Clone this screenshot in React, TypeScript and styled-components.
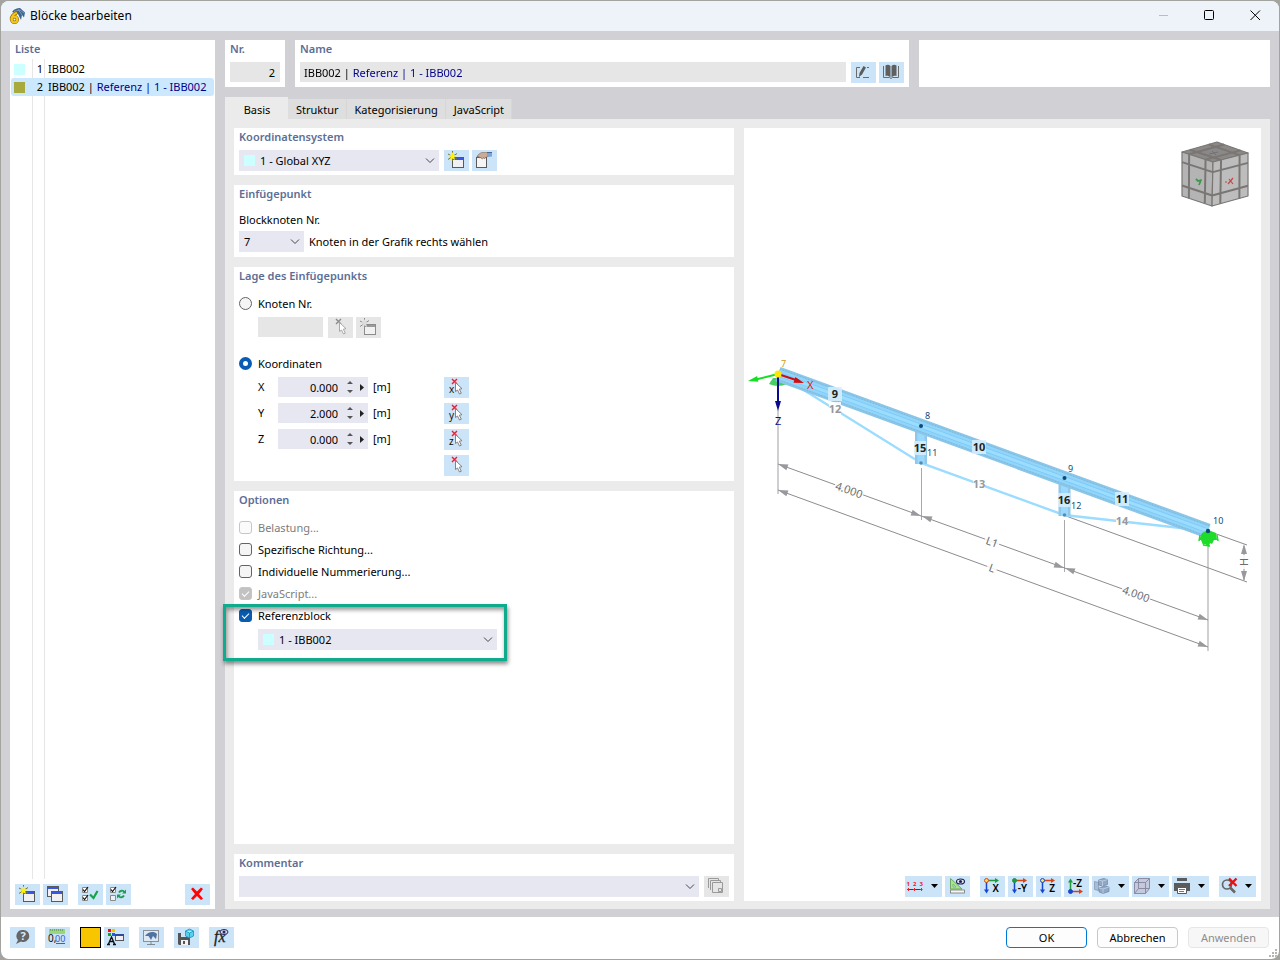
import React, { useState } from 'react';
import styled, { createGlobalStyle, css } from 'styled-components';

const color = {
  frame: '#d1d0d5',
  panel: '#ebebeb',
  field: '#e7e7f1',
  readOnly: '#e6e6e6',
  action: '#cbe4f8',
  heading: '#5c6e96',
  navy: '#00008b',
};

const GlobalStyle = createGlobalStyle`
  *, *::before, *::after { box-sizing: border-box; }
  body {
    margin: 0;
    background: #a3a39f;
    color: #000;
    font-family: "Noto Sans", "Open Sans", sans-serif;
    font-size: 11px;
    line-height: 18px;
  }
  button, input, select { font: inherit; color: inherit; margin: 0; }
`;

const Desktop = styled.div`
  display: flex;
  min-height: 100vh;
  padding: 1px;
`;

const Window = styled.div`
  flex: 1;
  display: flex;
  flex-direction: column;
  min-width: 0;
  border-radius: 8px;
  overflow: hidden;
  background: #fff;
`;

const TitleBar = styled.header`
  display: flex;
  align-items: center;
  height: 30px;
  padding-left: 8px;
  background: #eef3fa;
`;

const WindowTitle = styled.h1`
  flex: 1;
  margin: 0 0 0 5px;
  font-size: 12px;
  font-weight: 400;
`;

const CaptionButton = styled.button`
  width: 46px;
  height: 30px;
  padding: 0 1px 2px 0;
  border: 0;
  background: none;
  svg { display: block; margin: 0 auto; }
`;

const Body = styled.main`
  flex: 1;
  display: flex;
  gap: 10px;
  padding: 9px 9px 8px;
  background: ${color.frame};
`;

const ListPanel = styled.aside`
  display: flex;
  flex-direction: column;
  width: 205px;
  background: #fff;
`;

const Heading = styled.h2<{ $inset?: boolean }>`
  display: block;
  height: 19px;
  margin: 0;
  padding: 0 ${(p) => (p.$inset ? '5px' : '0')};
  color: ${color.heading};
  font-size: 11px;
  font-weight: 600;
  line-height: 18px;
`;

const ListArea = styled.div`
  flex: 1;
  padding: 1px 1px 0;
  background:
    linear-gradient(#e6e6e6, #e6e6e6) 22px 0 / 1px 100% no-repeat,
    linear-gradient(#e6e6e6, #e6e6e6) 34px 0 / 1px 100% no-repeat;
`;

const BlockTable = styled.table`
  width: 100%;
  table-layout: fixed;
  border-collapse: collapse;
  td { height: 18px; padding: 0; line-height: 18px; white-space: nowrap; }
  td:nth-child(1) { width: 22px; padding-left: 3px; border-radius: 3px 0 0 3px; }
  td:nth-child(2) { width: 12px; padding-right: 2px; text-align: right; }
  td:nth-child(3) { padding-left: 3px; border-radius: 0 3px 3px 0; }
`;

const BlockRow = styled.tr<{ $selected?: boolean }>`
  td { background: ${(p) => (p.$selected ? '#cce8ff' : 'transparent')}; }
`;

const Swatch = styled.span<{ $color: string }>`
  display: block;
  width: 11px;
  height: 11px;
  background: ${(p) => p.$color};
`;

const Reference = styled.span`
  color: ${color.navy};
`;

const ButtonRow = styled.div<{ $gap?: number }>`
  display: flex;
  gap: ${(p) => p.$gap ?? 3}px;
`;

const ListTools = styled.div`
  display: flex;
  gap: 10px;
  padding: 5px 5px 4px;
`;

const Spacer = styled.div`
  flex: 1;
`;

const IconButton = styled.button<{ $menu?: boolean }>`
  display: flex;
  align-items: center;
  flex: none;
  width: ${(p) => (p.$menu ? 37 : 25)}px;
  height: 21px;
  padding: 0;
  border: 0;
  background: ${color.action};
  &:disabled { background: ${color.readOnly}; }
  svg { display: block; flex: none; }
`;

const ColorButton = styled.button`
  width: 21px;
  height: 21px;
  margin-right: 3px;
  padding: 0;
  border: 1px solid #000;
  background: #f7c600;
`;

const Editor = styled.section`
  flex: 1;
  display: flex;
  flex-direction: column;
  min-width: 0;
`;

const HeaderRow = styled.div`
  display: grid;
  grid-template-columns: 60px minmax(0, 614fr) minmax(0, 351fr);
  gap: 10px;
  height: 47px;
`;

const HeaderCard = styled.div`
  padding: 0 5px;
  background: #fff;
`;

const FieldLine = styled.div`
  display: flex;
  gap: 5px;
  padding-top: 3px;
`;

const NumberField = styled.input`
  display: block;
  width: 100%;
  height: 20px;
  padding: 1px 5px 0;
  border: 0;
  background: ${color.readOnly};
  text-align: right;
`;

const NameBox = styled.div`
  flex: 1;
  height: 20px;
  background: ${color.readOnly};
`;

const NameField = styled.input`
  display: block;
  width: 100%;
  height: 20px;
  padding: 0 4px;
  border: 0;
  background: linear-gradient(90deg, #000 48px, ${color.navy} 48px);
  background-clip: text;
  -webkit-text-fill-color: transparent;
`;

const Tabs = styled.div`
  display: flex;
  align-items: flex-end;
  height: 32px;
`;

const Tab = styled.button<{ $active?: boolean }>`
  height: 20px;
  padding: 2px 7px 0 8px;
  border: 0;
  border-right: 1px solid #d6d6d6;
  background: #dedede;
  ${(p) =>
    p.$active &&
    css`
      width: 63px;
      height: 22px;
      padding-top: 4px;
      border: 0;
      background: ${color.panel};
    `}
`;

const TabPanel = styled.div`
  flex: 1;
  display: flex;
  gap: 10px;
  padding: 9px 9px 8px;
  background: ${color.panel};
`;

const FormColumn = styled.div`
  flex: none;
  display: flex;
  flex-direction: column;
  gap: 10px;
  width: 500px;
`;

const Card = styled.section<{ $grow?: boolean; $bottom?: number }>`
  flex: ${(p) => (p.$grow ? '1' : 'none')};
  padding: 0 5px ${(p) => p.$bottom ?? 5}px;
  background: #fff;
`;

const Line = styled.div<{ $top?: number; $gap?: number; $indent?: boolean }>`
  display: flex;
  align-items: ${(p) => (p.$indent ? 'flex-start' : 'center')};
  gap: ${(p) => p.$gap ?? 5}px;
  margin-top: ${(p) => p.$top ?? 0}px;
  padding-left: ${(p) => (p.$indent ? 19 : 0)}px;
`;

const FieldLabel = styled.label`
  display: block;
  margin: 7px 0 2px;
`;

const SelectBox = styled.div<{ $width?: number }>`
  position: relative;
  ${(p) => (p.$width ? `width: ${p.$width}px;` : 'flex: 1;')}
  height: 21px;
`;

const SelectField = styled.select<{ $swatch?: boolean }>`
  appearance: none;
  display: block;
  width: 100%;
  height: 21px;
  padding: 0 20px 0 ${(p) => (p.$swatch ? 21 : 5)}px;
  border: 0;
  border-radius: 0;
  background: ${color.field};
`;

const SelectSwatch = styled(Swatch)`
  position: absolute;
  top: 5px;
  left: 5px;
`;

const Chevron = styled.svg`
  position: absolute;
  top: 8px;
  right: 4px;
  pointer-events: none;
`;

const Choice = styled.label<{ $disabled?: boolean }>`
  display: flex;
  align-items: center;
  gap: 6px;
  height: 22px;
  color: ${(p) => (p.$disabled ? '#7c7c7c' : '#000')};
  input { margin-bottom: 1px; }
`;

const Checkbox = styled.input.attrs({ type: 'checkbox' })`
  appearance: none;
  display: flex;
  align-items: center;
  justify-content: center;
  width: 13px;
  height: 13px;
  border: 1px solid #636363;
  border-radius: 3px;
  background: #f5f5f5;
  &:checked { border-color: #0a5cb3; background: #0a5cb3; }
  &:disabled { border-color: #c6c6c6; background: #fbfbfb; }
  &:disabled:checked { background: #c2c2c2; }
  &:checked::before {
    content: '';
    width: 7px;
    height: 4px;
    border: solid #fff;
    border-width: 0 0 1px 1px;
    transform: translateY(-1px) rotate(-45deg);
  }
`;

const Radio = styled.input.attrs({ type: 'radio' })`
  appearance: none;
  width: 13px;
  height: 13px;
  border: 1px solid #636363;
  border-radius: 50%;
  background: #f5f5f5;
  &:checked { border: 4px solid #0a5cb3; background: #fff; }
`;

const NodeField = styled.input`
  width: 65px;
  height: 20px;
  padding: 0;
  border: 0;
  background: ${color.readOnly};
`;

const CoordinateLine = styled.div`
  display: grid;
  grid-template-columns: 20px 90px 76px 25px;
  align-items: start;
  height: 26px;
  padding-left: 19px;
  &:last-child { height: 21px; }
  label { line-height: 20px; }
  button { grid-column: 4; }
`;

const Unit = styled.span`
  padding-left: 5px;
  line-height: 20px;
`;

const Spinner = styled.div`
  display: flex;
  height: 20px;
  background: ${color.field};
`;

const SpinnerField = styled.input`
  width: 60px;
  height: 20px;
  padding: 1px 0 0;
  border: 0;
  background: none;
  text-align: right;
`;

const SpinnerButtons = styled.button`
  width: 30px;
  height: 20px;
  padding: 0;
  border: 0;
  background: none;
  svg { display: block; }
`;

const ReferenceGroup = styled.div`
  position: relative;
`;

const Highlight = styled.div`
  position: absolute;
  top: -1px;
  left: -16px;
  width: 284px;
  height: 57px;
  border: 3px solid #0fab8c;
  box-shadow: 1px 3px 4px rgba(0, 0, 0, 0.45), inset 1px 3px 4px rgba(0, 0, 0, 0.4);
  pointer-events: none;
`;

const Viewport = styled.section`
  flex: 1;
  display: flex;
  flex-direction: column;
  min-width: 0;
  background: #fff;
`;

const Scene = styled.svg`
  flex: 1;
  display: block;
  width: 100%;
  min-height: 400px;
`;

const ViewTools = styled.div`
  display: flex;
  justify-content: flex-end;
  gap: 10px;
  padding: 0 5px 4px;
`;

const Footer = styled.footer`
  position: relative;
  display: flex;
  align-items: center;
  gap: 10px;
  height: 42px;
  padding: 0 10px 1px 9px;
`;

const DialogButton = styled.button<{ $primary?: boolean }>`
  width: 81px;
  height: 21px;
  padding: 0;
  border: 1px solid ${(p) => (p.$primary ? '#0078d4' : '#c8c8c8')};
  border-radius: 4px;
  background: #fdfdfd;
  &:disabled { border-color: #e6e6e6; background: #f7f7f7; color: #8e8e8e; }
`;

const SizeGrip = styled.svg`
  position: absolute;
  right: 2px;
  bottom: 2px;
`;

function Icon({ children, width = 25 }: { children: React.ReactNode; width?: number }) {
  return (
    <svg width={width} height="21" viewBox={`0 0 ${width} 21`} fill="none" aria-hidden="true">
      {children}
    </svg>
  );
}

function MiniWindow({ x, y, gray }: { x: number; y: number; gray?: boolean }) {
  return (
    <g>
      <rect x={x + 0.5} y={y + 0.5} width="11" height="10" fill="#f1f1f3" stroke={gray ? '#8b8b8b' : '#5a5a5a'} />
      <rect x={x + 1} y={y + 1} width="10" height="2" fill={gray ? '#9a9a9a' : '#3857e6'} />
    </g>
  );
}

function NewIcon({ gray }: { gray?: boolean }) {
  return (
    <Icon>
      <MiniWindow x={8} y={7} gray={gray} />
      <path d="M8.500 1v10M4 4l9 5M4 9.500l9-6" stroke={gray ? '#8f8f8f' : '#77772c'} />
      <path d="M8.500 2l1.200 3 3 .500-2.500 1.500.800 3-2.500-1.600L6 10l.800-3L4.300 5.500l3-.500z" fill={gray ? '#dcdcdc' : '#fff200'} />
    </Icon>
  );
}

function EditIcon() {
  return (
    <Icon>
      <rect x="4.500" y="7.500" width="10" height="10" fill="#f5f5f5" stroke="#5a5a5a" />
      <path d="M5 7h4" stroke="#3857e6" strokeWidth="2" />
      <path d="M5 6.500C6 4.500 8 3 10 2.500h5l1 .500v3.500l-2 .500-1 1.500h-1l-.500-1-1 1.500-1-.500-.500-1-1.500.500v-1z" fill="#cbab96" stroke="#876b58" strokeWidth=".6" />
      <path d="M15 2.500h5v4l-4 .500z" fill="#7fa3d4" />
      <path d="M15 2.500h5" stroke="#44679b" />
    </Icon>
  );
}

function CopyIcon() {
  return (
    <Icon>
      <MiniWindow x={4} y={2} />
      <MiniWindow x={8} y={7} />
    </Icon>
  );
}

function CheckAllIcon() {
  return (
    <Icon>
      <path d="M4.500 3.500h5v5h-5zM4.500 11.500h5v5h-5z" fill="#fff" stroke="#8a8a8a" />
      <path d="M5 5.500l1.500 2L10 3M5 13.500l1.500 2 3.500-4.500" stroke="#111" strokeWidth="1.200" />
      <path d="M12 10.500l3.500 3.500 4-7" stroke="#16a34c" strokeWidth="2.200" />
    </Icon>
  );
}

function InvertIcon() {
  return (
    <Icon>
      <path d="M4.500 3.500h5v5h-5z" fill="#fff" stroke="#8a8a8a" />
      <path d="M4.500 11.500h5v5h-5z" fill="#e9f2fa" stroke="#8a8a8a" />
      <path d="M5 5.500l1.500 2L10 3" stroke="#111" strokeWidth="1.200" />
      <path d="M13 8.500c1-2 4-2.500 5.500-.500M18 11.500c-1 2-4 2.500-5.500 .500" stroke="#229b50" strokeWidth="1.800" />
      <path d="M20 5.500v4h-4zM11 14.500v-4h4z" fill="#229b50" />
    </Icon>
  );
}

function DeleteIcon() {
  return (
    <Icon>
      <path d="M6 5l2-1.500 4 4 4-4L18 5l-4 5 4 4.500-2 1.500-4-4-4 4-2-1.500 4-4.500z" fill="#fb0505" />
    </Icon>
  );
}

function PenIcon() {
  return (
    <Icon>
      <path d="M9 5.500H5.500v10H9M12 15.500h6M16 5.500h2" stroke="#6b6b6b" />
      <path d="M8 15l.500-4 4-7 2.500 1.500-4 7z" fill="#5b5b5b" />
    </Icon>
  );
}

function BookIcon() {
  return (
    <Icon>
      <path d="M11.500 4C10 2.500 8 2.500 6.500 3.500v10.500c2-.500 3.500 0 5 1.500zM12.500 4c1.500-1.500 3.500-1.500 5-.500v10.500c-2-.500-3.500 0-5 1.500z" fill="#5f5f5f" />
      <path d="M4.500 4v11.500h6l1.500 1 1.500-1h6V4" stroke="#6b6b6b" />
    </Icon>
  );
}

function PickIcon({ axis, gray }: { axis?: string; gray?: boolean }) {
  return (
    <Icon>
      <path d="M8 2l5 5M13 2L8 7" stroke={gray ? '#8b8b8b' : '#f01b2d'} strokeWidth="1.400" />
      <path d="M11.500 5.500v9l2-1.500 2 4 1.800-.800-2-4 2.700-.500z" fill="#fff" stroke={gray ? '#a0a0a0' : '#777'} strokeWidth=".9" />
      {axis && (
        <text x="5" y="16" fontSize="10" fill="#111">
          {axis}
        </text>
      )}
    </Icon>
  );
}

function StackIcon() {
  return (
    <Icon>
      <path d="M4.500 12V2.500h10V4M6.500 14V4.500h10V6M8.500 6.500h10v10h-10z" stroke="#9a9a9a" />
      <path d="M14.500 12.500h3v3h-3z" stroke="#9a9a9a" />
    </Icon>
  );
}

function HelpIcon() {
  return (
    <Icon>
      <path d="M13 3a6 6 0 1 1-2 11.500L6 17l2-4A6 6 0 0 1 13 3z" fill="#666" />
      <text x="13" y="13" fontSize="11" fontWeight="700" textAnchor="middle" fill="#dcecf8">?</text>
    </Icon>
  );
}

function UnitsIcon() {
  return (
    <Icon>
      <path d="M4 2h16v5H4z" fill="#9bd67c" />
      <path d="M5.500 2v2M7.500 2v2M9.500 2v2M11.500 2v2M13.500 2v2M15.500 2v2M17.500 2v2" stroke="#549444" strokeWidth=".6" />
      <text x="3" y="15" fontSize="10" fill="#111">0,</text>
      <text x="10" y="15" fontSize="9" fill="#2e62d8">00</text>
      <path d="M11 16.500h9" stroke="#2e62d8" />
    </Icon>
  );
}

function DisplayIcon() {
  return (
    <Icon>
      <path d="M4 2h3v3H4z" fill="#e11" />
      <path d="M8 2h3v3H8z" fill="#e5c800" />
      <path d="M4 6h3v3H4z" fill="#1b9e2c" />
      <path d="M8 6h3v3H8z" fill="#2458e0" />
      <path d="M4.500 17l3-7 3 7M5.500 14.500h4M3 17.500h3M9 17.500h3" stroke="#111" strokeWidth="1.400" />
      <rect x="11.500" y="7.500" width="8" height="6" fill="#eee" stroke="#555" />
      <path d="M11 8h9" stroke="#334a9c" strokeWidth="2" />
    </Icon>
  );
}

function MonitorIcon() {
  return (
    <Icon>
      <rect x="4.500" y="3.500" width="15" height="11" fill="#dfe9f2" stroke="#8a9198" />
      <path d="M6 9c3-4.500 9-5 12-2l-1 5-3-3-2 4-2.500-4z" fill="#4e73a5" />
      <path d="M12 14v3M8 17.500h8" stroke="#7f8790" />
    </Icon>
  );
}

function SaveIcon() {
  return (
    <Icon>
      <path d="M4 6h12v12H5l-1-1z" fill="#555" />
      <path d="M7 6h6v4H7z" fill="#cbe4f8" />
      <path d="M7 13h7v5H7z" fill="#f2f2f2" />
      <path d="M9 14h2v3H9z" fill="#555" />
      <path d="M15.500 2l4 2v5l-4 2-4-2V4zM11.500 4l4 2 4-2M15.500 6v5" fill="#5bd0ee" stroke="#1793bb" strokeWidth=".8" />
    </Icon>
  );
}

function FormulaIcon() {
  return (
    <Icon>
      <text x="5" y="15" fontSize="16" fontFamily="Liberation Serif, serif" fontStyle="italic" fill="#222" stroke="#222" strokeWidth=".3">fx</text>
      <ellipse cx="15" cy="5" rx="4" ry="2.500" fill="#d7daf2" stroke="#27275a" />
      <circle cx="15" cy="5" r="1.500" fill="#27275a" />
    </Icon>
  );
}

const MenuArrow = () => <path d="M26 8h7l-3.500 4z" fill="#000" />;

function NumberingIcon() {
  return (
    <Icon width={37}>
      <g fontSize="6" fontWeight="700" fill="#f0202c">
        <text x="1.500" y="10">1</text>
        <text x="8" y="10">2</text>
        <text x="14.500" y="10">3</text>
      </g>
      <path d="M3 13.500h14" stroke="#333a6a" />
      <path d="M2 13.500h2.500M8 13.500h2.500M15 13.500h2.500M3.500 12v3M9.500 12v3M16.500 12v3" stroke="#f0202c" />
      <MenuArrow />
    </Icon>
  );
}

function MeasureIcon() {
  return (
    <Icon>
      <path d="M5.500 2.500v10.500H17z" fill="#a5e88b" stroke="#6fa765" />
      <path d="M8 8v3h3z" fill="#cbe4f8" stroke="#6fa765" strokeWidth=".7" />
      <rect x="5.500" y="14" width="14" height="3" fill="#f5f5f5" stroke="#777" strokeWidth=".8" />
      <ellipse cx="15.500" cy="5.500" rx="4" ry="2.500" fill="#e4e7fa" stroke="#1e2350" strokeWidth="1.200" />
      <circle cx="15.500" cy="5.500" r="1.600" fill="#1e2350" />
    </Icon>
  );
}

type AxisIconProps = { label: string; node: string; ring: string; horizontal: string; up?: boolean };

function AxisIcon({ label, node, ring, horizontal, up }: AxisIconProps) {
  return (
    <Icon>
      {up ? (
        <>
          <path d="M6.500 15V5" stroke="#1f9b3d" strokeWidth="1.500" />
          <path d="M4 6.500h5L6.500 2.500z" fill="#1f9b3d" />
          <path d="M7 15.500h9" stroke={horizontal} strokeWidth="1.500" />
          <path d="M15 13v5l4-2.500z" fill={horizontal} />
          <circle cx="6.500" cy="15.500" r="2" fill={node} stroke={ring} />
          <text x="9" y="11" fontSize="10" fontWeight="600" fill="#000">{label}</text>
        </>
      ) : (
        <>
          <path d="M6.500 5v10" stroke="#1746d1" strokeWidth="1.500" />
          <path d="M4 13.500h5l-2.500 4z" fill="#1746d1" />
          <path d="M7 4.500h9" stroke={horizontal} strokeWidth="1.500" />
          <path d="M15 2v5l4-2.500z" fill={horizontal} />
          <circle cx="6.500" cy="4.500" r="2" fill={node} stroke={ring} />
          <text x="19" y="16" fontSize="10" fontWeight="600" textAnchor="end" fill="#000">{label}</text>
        </>
      )}
    </Icon>
  );
}

function SolidsIcon() {
  return (
    <Icon width={37}>
      <path d="M2.500 5.500l4 1v8l-4-1z" fill="#a9bcd3" stroke="#7f94b0" strokeWidth=".7" />
      <path d="M6.500 4l5-1.500 4 1v5l-5 1.500-4-1z" fill="#8fa8c6" stroke="#6f87a6" strokeWidth=".7" />
      <path d="M7 12l6-2 4 1v4.500l-6 2-4-1.500z" fill="#8fa8c6" stroke="#6f87a6" strokeWidth=".7" />
      <path d="M6.500 4l4 1 5-1.500M10.500 5v5M7 12l4 1 6-2M11 13v4.500" stroke="#c5d3e4" strokeWidth=".8" />
      <MenuArrow />
    </Icon>
  );
}

function BoxIcon() {
  return (
    <Icon width={37}>
      <path d="M2.500 6.500l4-4h11v10l-4 5h-11z" fill="#c6c8dd" />
      <path d="M2.500 6.500h11v11h-11zM2.500 6.500l4-4h11l-4 4M17.500 2.500v10l-4 5M6.500 2.500v10l-4 5M6.500 12.500h11" stroke="#83859f" strokeWidth=".9" />
      <MenuArrow />
    </Icon>
  );
}

function PrintIcon() {
  return (
    <Icon width={37}>
      <path d="M5 2h10v3H5zM2 7h16v8h-3v-3H5v3H2z" fill="#5b5b5b" />
      <path d="M5.500 11.500h9v6h-9z" fill="#fff" stroke="#5b5b5b" />
      <path d="M7 13.500h6M7 15.500h5" stroke="#777" />
      <MenuArrow />
    </Icon>
  );
}

function SearchOffIcon() {
  return (
    <Icon width={37}>
      <circle cx="8" cy="8.500" r="4.500" stroke="#666" strokeWidth="1.700" />
      <path d="M11 11.500l5 5" stroke="#666" strokeWidth="2.500" />
      <path d="M10 2.500l7.500 7.500M17.500 2.500L10 10" stroke="#f20d0d" strokeWidth="2.400" />
      <MenuArrow />
    </Icon>
  );
}

function AppLogo() {
  return (
    <svg width="16" height="16" viewBox="0 0 16 16" aria-hidden="true">
      <path d="M3 4C5 1 8 0 11 0l5 4.500-1 5-2-2.500-1 5-3-6z" fill="#3d628c" />
      <path d="M5 3.500l6-1.500 4 3M9 1l4 6" stroke="#86a8c8" strokeWidth=".8" fill="none" />
      <path d="M8 5C5 5.500 2.500 8 2.500 11.500" fill="none" stroke="#8d6b00" strokeWidth="3.600" />
      <circle cx="5.500" cy="11.500" r="2.800" fill="#eef3fa" stroke="#8d6b00" strokeWidth="3.400" />
      <path d="M8 5C5 5.500 2.500 8 2.500 11.500" fill="none" stroke="#f3c51c" strokeWidth="2.200" />
      <circle cx="5.500" cy="11.500" r="2.800" fill="none" stroke="#f3c51c" strokeWidth="2.200" />
    </svg>
  );
}

type SelectProps = { id?: string; label?: string; width?: number; swatch?: string; options: string[] };

function Select({ id, label, width, swatch, options }: SelectProps) {
  return (
    <SelectBox $width={width}>
      <SelectField id={id} aria-label={label} $swatch={!!swatch}>
        {options.map((option) => (
          <option key={option}>{option}</option>
        ))}
      </SelectField>
      {swatch && <SelectSwatch $color={swatch} />}
      <Chevron width="10" height="6" viewBox="0 0 10 6" fill="none" stroke="#444" aria-hidden="true">
        <path d="M1 .5l4 4 4-4" />
      </Chevron>
    </SelectBox>
  );
}

type Point = [number, number];

function faceLines(a: Point, b: Point, c: Point, d: Point) {
  const mix = (p: Point, q: Point, t: number) => `${p[0] + (q[0] - p[0]) * t} ${p[1] + (q[1] - p[1]) * t}`;
  return [0.23, 0.76]
    .map((t) => `M${mix(a, b, t)}L${mix(d, c, t)}M${mix(a, d, t)}L${mix(b, c, t)}`)
    .join('');
}

function NavigationCube() {
  const back: Point = [1217, 142];
  const left: Point = [1182, 152];
  const right: Point = [1248, 153];
  const front: Point = [1213, 162];
  const leftLow: Point = [1182, 196];
  const frontLow: Point = [1212, 206];
  const rightLow: Point = [1248, 196];
  const faces: [Point, Point, Point, Point, string][] = [
    [left, back, right, front, '#8b8988'],
    [left, front, frontLow, leftLow, '#b4b4b4'],
    [front, right, rightLow, frontLow, '#bdbdbd'],
  ];
  return (
    <g stroke="#7a7674" strokeWidth="2" strokeLinejoin="round">
      {faces.map(([a, b, c, d, fill]) => (
        <g key={fill}>
          <polygon points={[a, b, c, d].join(' ')} fill={fill} strokeWidth="1.200" />
          <path d={faceLines(a, b, c, d)} fill="none" />
        </g>
      ))}
      <path d="M1209 154l9-2M1212 151l4 4" stroke="#6a7186" strokeWidth="1" />
      <path d="M1196 179l2 2 3-1-2 5" fill="none" stroke="#3d9a4b" strokeWidth="1.800" />
      <path d="M1229 179l4 5M1233 178l-5 6M1225 182h2" fill="none" stroke="#c94444" strokeWidth="1.200" />
    </g>
  );
}

function Arrow({ x, y, angle, fill = '#99999d' }: { x: number; y: number; angle: number; fill?: string }) {
  return <path d="M0 0l-10-3v6z" fill={fill} transform={`translate(${x} ${y}) rotate(${angle})`} />;
}

type TagProps = { x: number; y: number; text: string; width?: number; fill?: string; back?: string; angle?: number };

function Tag({ x, y, text, width = 14, fill = '#222', back = '#d9eefb', angle = 0 }: TagProps) {
  return (
    <g transform={`translate(${x} ${y}) rotate(${angle})`}>
      <rect x={-width / 2} y="-7" width={width} height="14" fill={back} fillOpacity=".85" />
      <text y="4" textAnchor="middle" fill={fill}>{text}</text>
    </g>
  );
}

function TrussScene() {
  return (
    <Scene viewBox="744 128 517 748" role="img" aria-label="Binder" fontSize="11">
      <NavigationCube />
      <g stroke="#cfcfd1" strokeWidth="2">
        <path d="M778 410v84M1208 545v106" />
      </g>
      <path d="M921.500 468v52M1064.500 520v52" stroke="#a9a9ac" />
      <path
        d="M778 464L1208 620M778 490L1208 647M1066 516L1247 582M1208 531L1247 545M1244 546v34"
        stroke="#8c8c90"
        fill="none"
      />
      <Arrow x={778} y={464} angle={200} />
      <Arrow x={921} y={516} angle={20} />
      <Arrow x={922} y={516} angle={200} />
      <Arrow x={1064} y={568} angle={20} />
      <Arrow x={1065} y={568} angle={200} />
      <Arrow x={1208} y={620} angle={20} />
      <Arrow x={778} y={490} angle={200} />
      <Arrow x={1208} y={647} angle={20} />
      <Arrow x={1244} y={544} angle={-90} />
      <Arrow x={1244} y={581} angle={90} />
      <g fontSize="11">
        <Tag x={849} y={490} angle={20} width={30} text="4.000" fill="#6c6c6c" back="#fff" />
        <Tag x={1136} y={594} angle={20} width={30} text="4.000" fill="#6c6c6c" back="#fff" />
        <Tag x={992} y={542} angle={20} width={15} text="L1" fill="#6c6c6c" back="#fff" />
        <Tag x={992} y={568} angle={20} width={10} text="L" fill="#6c6c6c" back="#fff" />
        <Tag x={1244} y={562} angle={-90} width={14} text="H" fill="#6c6c6c" back="#fff" />
      </g>

      <path d="M769 384l4-6h11l3 6q-9 4-18 0z" fill="#45cf62" />
      <path d="M778 374L921 463L1064 515L1208 531" fill="none" stroke="#9bdcff" strokeWidth="2.400" />
      <g fill="none">
        <path d="M921 426v38M1064.500 478v38" stroke="#8fc8e8" strokeWidth="12" />
        <path d="M921 426v38M1064.500 478v38" stroke="#9ad9fd" strokeWidth="7" />
        <path d="M778 374L1208 531" stroke="#8ac6e8" strokeWidth="15" />
        <path d="M778 374L1208 531" stroke="#92d5fb" strokeWidth="9" />
        <path d="M778 374L1208 531" stroke="#7fc9f5" strokeWidth="5" />
        <path d="M778 374L1208 531" stroke="#9addff" strokeWidth="3" />
        <path d="M776 379L1206 536M780 369L1210 526" stroke="#78b6da" strokeDasharray="1 2" />
      </g>
      <g fontWeight="700">
        <Tag x={835} y={394} text="9" />
        <Tag x={979} y={447} text="10" />
        <Tag x={1122} y={499} text="11" />
        <Tag x={920} y={448} width={12} text="15" />
        <Tag x={1064} y={500} width={12} text="16" />
        <Tag x={835} y={409} width={12} text="12" fill="#96989c" back="#fff" />
        <Tag x={979} y={484} width={12} text="13" fill="#96989c" back="#fff" />
        <Tag x={1122} y={521} width={12} text="14" fill="#96989c" back="#fff" />
      </g>
      <path d="M1202 533l6-3 8 3 1 7-3 0-2 4-2-1-1 4-4-3-2 1-2-5-2 0z" fill="#1fdc2b" />
      <path d="M1200 535l-1 6M1217 535l1 6M1203 545l7 1" stroke="#1fdc2b" strokeWidth="1.500" />
      <g fill="#0f4a74">
        <circle cx="921" cy="426" r="2" />
        <circle cx="1064.500" cy="478" r="2" />
        <circle cx="1208" cy="531" r="2.200" />
        <circle cx="921" cy="463" r="1.800" fill="#4f8db8" />
        <circle cx="1064.500" cy="515" r="1.800" fill="#4f8db8" />
      </g>
      <g fill="#0e4e78" fontSize="9">
        <text x="925" y="419">8</text>
        <text x="927" y="456">11</text>
        <text x="1068" y="472">9</text>
        <text x="1071" y="509">12</text>
        <text x="1213" y="524">10</text>
        <text x="781" y="367" fill="#cf9a1a">7</text>
      </g>
      <path d="M778 374l-24 6" stroke="#12e022" strokeWidth="2" />
      <Arrow x={748} y={381} angle={168} fill="#12e022" />
      <path d="M778 374l18 6" stroke="#d00c0c" strokeWidth="2" />
      <Arrow x={804} y={383} angle={18} fill="#d00c0c" />
      <path d="M778 374v30" stroke="#0a0a90" strokeWidth="2" />
      <Arrow x={778} y={411} angle={90} fill="#0a0a90" />
      <circle cx="778" cy="374" r="3.500" fill="#ffe500" />
      <text x="807" y="389" fill="#e51616">X</text>
      <text x="775" y="425" fill="#10108a">Z</text>
    </Scene>
  );
}

function Coordinate({ axis, initial }: { axis: string; initial: string }) {
  const [value, setValue] = useState(initial);
  const id = `coordinate-${axis}`;
  return (
    <CoordinateLine>
      <label htmlFor={id}>{axis}</label>
      <Spinner>
        <SpinnerField id={id} value={value} onChange={(e) => setValue(e.target.value)} />
        <SpinnerButtons aria-label={`${axis} ändern`}>
          <svg width="30" height="20" viewBox="0 0 30 20" aria-hidden="true">
            <path d="M9 7l3-3 3 3zM9 13l3 3 3-3z" fill="#555" />
            <path d="M22 7v7l4-3.500z" fill="#222" />
          </svg>
        </SpinnerButtons>
      </Spinner>
      <Unit>[m]</Unit>
      <IconButton aria-label={`${axis} wählen`}>
        <PickIcon axis={axis.toLowerCase()} />
      </IconButton>
    </CoordinateLine>
  );
}

const tabs = ['Basis', 'Struktur', 'Kategorisierung', 'JavaScript'];

export default function App() {
  const [tab, setTab] = useState('Basis');

  return (
    <Desktop>
      <GlobalStyle />
      <Window>
        <TitleBar>
          <AppLogo />
          <WindowTitle>Blöcke bearbeiten</WindowTitle>
          <CaptionButton aria-label="Minimieren">
            <svg width="11" height="11" stroke="#b9bdc3"><path d="M1 5.500h9" /></svg>
          </CaptionButton>
          <CaptionButton aria-label="Maximieren">
            <svg width="11" height="11" fill="none" stroke="#000"><rect x=".5" y=".5" width="9" height="9" rx="1" /></svg>
          </CaptionButton>
          <CaptionButton aria-label="Schließen">
            <svg width="11" height="11" stroke="#000"><path d="M.5.500l9.500 9.500M10 .500L.500 10" /></svg>
          </CaptionButton>
        </TitleBar>

        <Body>
          <ListPanel>
            <Heading $inset>Liste</Heading>
            <ListArea>
              <BlockTable>
                <tbody>
                  <BlockRow>
                    <td><Swatch $color="#ccffff" /></td>
                    <td>1</td>
                    <td>IBB002</td>
                  </BlockRow>
                  <BlockRow $selected>
                    <td><Swatch $color="#a8aa3e" /></td>
                    <td>2</td>
                    <td>IBB002 | <Reference>Referenz | 1 - IBB002</Reference></td>
                  </BlockRow>
                </tbody>
              </BlockTable>
            </ListArea>
            <ListTools>
              <ButtonRow>
                <IconButton aria-label="Neu"><NewIcon /></IconButton>
                <IconButton aria-label="Kopieren"><CopyIcon /></IconButton>
              </ButtonRow>
              <ButtonRow>
                <IconButton aria-label="Alle auswählen"><CheckAllIcon /></IconButton>
                <IconButton aria-label="Auswahl umkehren"><InvertIcon /></IconButton>
              </ButtonRow>
              <Spacer />
              <IconButton aria-label="Löschen"><DeleteIcon /></IconButton>
            </ListTools>
          </ListPanel>

          <Editor>
            <HeaderRow>
              <HeaderCard>
                <Heading as="label" htmlFor="block-number">Nr.</Heading>
                <FieldLine>
                  <NumberField id="block-number" readOnly value="2" />
                </FieldLine>
              </HeaderCard>
              <HeaderCard>
                <Heading as="label" htmlFor="block-name">Name</Heading>
                <FieldLine>
                  <NameBox>
                    <NameField id="block-name" readOnly value="IBB002 | Referenz | 1 - IBB002" />
                  </NameBox>
                  <ButtonRow>
                    <IconButton aria-label="Name bearbeiten"><PenIcon /></IconButton>
                    <IconButton aria-label="Bibliothek"><BookIcon /></IconButton>
                  </ButtonRow>
                </FieldLine>
              </HeaderCard>
              <HeaderCard />
            </HeaderRow>

            <Tabs role="tablist">
              {tabs.map((name) => (
                <Tab key={name} role="tab" aria-selected={tab === name} $active={tab === name} onClick={() => setTab(name)}>
                  {name}
                </Tab>
              ))}
            </Tabs>

            <TabPanel role="tabpanel">
              <FormColumn>
                <Card $bottom={4}>
                  <Heading>Koordinatensystem</Heading>
                  <Line $top={3}>
                    <Select label="Koordinatensystem" width={200} swatch="#ccffff" options={['1 - Global XYZ']} />
                    <ButtonRow>
                      <IconButton aria-label="Neues Koordinatensystem"><NewIcon /></IconButton>
                      <IconButton aria-label="Koordinatensystem bearbeiten"><EditIcon /></IconButton>
                    </ButtonRow>
                  </Line>
                </Card>

                <Card>
                  <Heading>Einfügepunkt</Heading>
                  <FieldLabel htmlFor="block-node">Blockknoten Nr.</FieldLabel>
                  <Line>
                    <Select id="block-node" width={65} options={['7', '8', '9', '10', '11', '12']} />
                    <span>Knoten in der Grafik rechts wählen</span>
                  </Line>
                </Card>

                <Card>
                  <Heading>Lage des Einfügepunkts</Heading>
                  <Line $top={7}>
                    <Choice><Radio name="position" />Knoten Nr.</Choice>
                  </Line>
                  <Line $top={2} $indent>
                    <NodeField aria-label="Knoten Nr." disabled />
                    <ButtonRow>
                      <IconButton disabled aria-label="Knoten wählen"><PickIcon gray /></IconButton>
                      <IconButton disabled aria-label="Neuer Knoten"><NewIcon gray /></IconButton>
                    </ButtonRow>
                  </Line>
                  <Line $top={15}>
                    <Choice><Radio name="position" defaultChecked />Koordinaten</Choice>
                  </Line>
                  <Line $top={2} />
                  <Coordinate axis="X" initial="0.000" />
                  <Coordinate axis="Y" initial="2.000" />
                  <Coordinate axis="Z" initial="0.000" />
                  <CoordinateLine>
                    <IconButton aria-label="Punkt wählen"><PickIcon /></IconButton>
                  </CoordinateLine>
                </Card>

                <Card $grow>
                  <Heading>Optionen</Heading>
                  <Line $top={7} />
                  <Choice $disabled><Checkbox disabled />Belastung...</Choice>
                  <Choice><Checkbox />Spezifische Richtung...</Choice>
                  <Choice><Checkbox />Individuelle Nummerierung...</Choice>
                  <Choice $disabled><Checkbox disabled defaultChecked />JavaScript...</Choice>
                  <ReferenceGroup>
                    <Choice><Checkbox defaultChecked />Referenzblock</Choice>
                    <Line $top={2} $indent>
                      <Select label="Referenzblock" width={239} swatch="#ccffff" options={['1 - IBB002']} />
                    </Line>
                    <Highlight />
                  </ReferenceGroup>
                </Card>

                <Card $bottom={4}>
                  <Heading as="label" htmlFor="comment">Kommentar</Heading>
                  <Line $top={3}>
                    <Select id="comment" options={['']} />
                    <IconButton disabled aria-label="Kommentare"><StackIcon /></IconButton>
                  </Line>
                </Card>
              </FormColumn>

              <Viewport>
                <TrussScene />
                <ViewTools>
                  <ButtonRow>
                    <IconButton $menu aria-label="Nummerierung"><NumberingIcon /></IconButton>
                    <IconButton aria-label="Bemaßung"><MeasureIcon /></IconButton>
                  </ButtonRow>
                  <ButtonRow>
                    <IconButton aria-label="Ansicht in X">
                      <AxisIcon label="X" node="#ffe14a" ring="#d84315" horizontal="#1f9b3d" />
                    </IconButton>
                    <IconButton aria-label="Ansicht gegen Y">
                      <AxisIcon label="-Y" node="#1f9b3d" ring="#1f9b3d" horizontal="#d84315" />
                    </IconButton>
                    <IconButton aria-label="Ansicht in Z">
                      <AxisIcon label="Z" node="#ffe14a" ring="#1746d1" horizontal="#d84315" />
                    </IconButton>
                    <IconButton aria-label="Ansicht gegen Z">
                      <AxisIcon label="-Z" node="#1746d1" ring="#1746d1" horizontal="#d84315" up />
                    </IconButton>
                    <IconButton $menu aria-label="Darstellung"><SolidsIcon /></IconButton>
                    <IconButton $menu aria-label="Rahmen"><BoxIcon /></IconButton>
                    <IconButton $menu aria-label="Drucken"><PrintIcon /></IconButton>
                  </ButtonRow>
                  <IconButton $menu aria-label="Zoom zurücksetzen"><SearchOffIcon /></IconButton>
                </ViewTools>
              </Viewport>
            </TabPanel>
          </Editor>
        </Body>

        <Footer>
          <IconButton aria-label="Hilfe"><HelpIcon /></IconButton>
          <IconButton aria-label="Einheiten"><UnitsIcon /></IconButton>
          <ButtonRow $gap={0}>
            <ColorButton aria-label="Farbe" />
            <IconButton aria-label="Anzeigeeigenschaften"><DisplayIcon /></IconButton>
          </ButtonRow>
          <IconButton aria-label="Grafik"><MonitorIcon /></IconButton>
          <IconButton aria-label="Speichern"><SaveIcon /></IconButton>
          <IconButton aria-label="Formeln"><FormulaIcon /></IconButton>
          <Spacer />
          <DialogButton $primary>OK</DialogButton>
          <DialogButton>Abbrechen</DialogButton>
          <DialogButton disabled>Anwenden</DialogButton>
          <SizeGrip width="8" height="8" fill="#b5b5b5" aria-hidden="true">
            <path d="M6 0h2v2H6zM3 3h2v2H3zM6 3h2v2H6zM0 6h2v2H0zM3 6h2v2H3zM6 6h2v2H6z" />
          </SizeGrip>
        </Footer>
      </Window>
    </Desktop>
  );
}
